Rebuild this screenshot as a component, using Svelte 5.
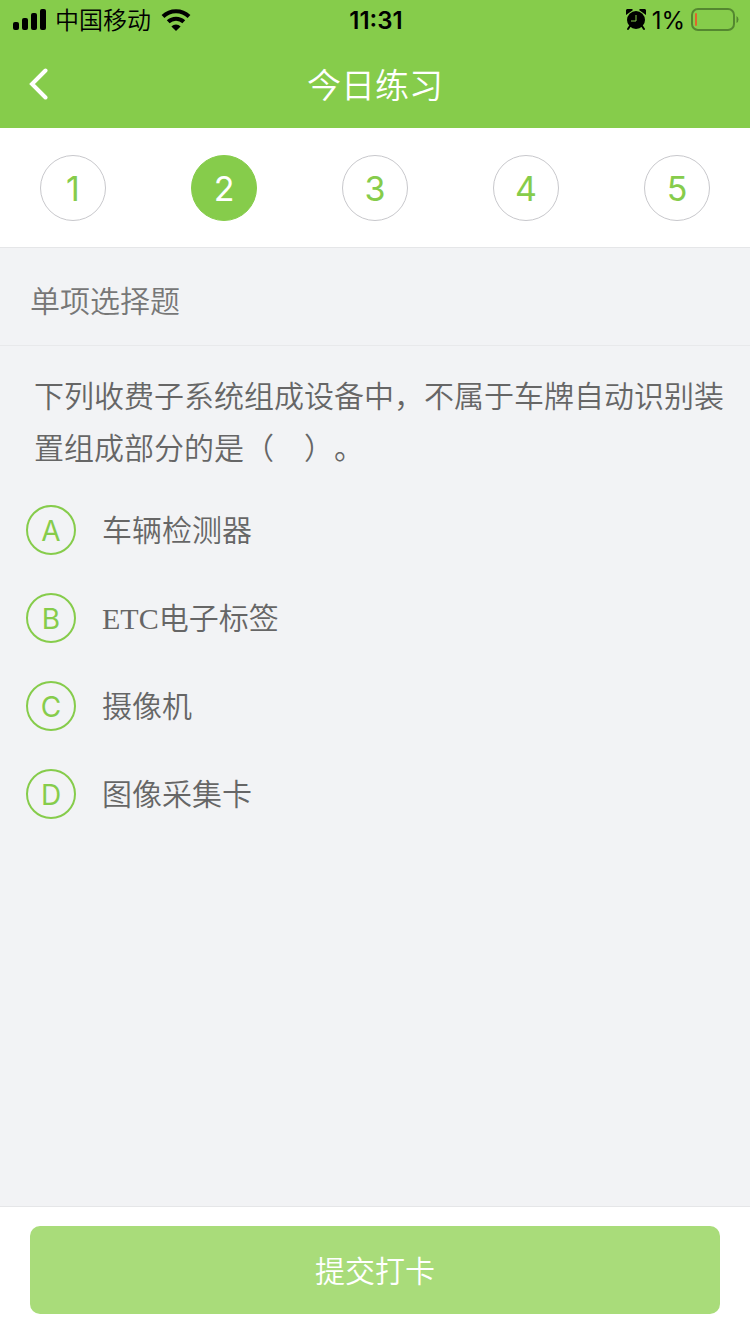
<script>
    const steps = [1, 2, 3, 4, 5];

    const options = [
        { key: 'A', text: '车辆检测器' },
        { key: 'B', text: 'ETC电子标签' },
        { key: 'C', text: '摄像机' },
        { key: 'D', text: '图像采集卡' }
    ];

    let current = 2;
    let answer = '';
</script>

<div class="page">
    <header class="top">
        <div class="status-bar">
            <div class="status-left">
                <svg class="signal" width="34" height="22" viewBox="0 0 34 22" aria-hidden="true">
                    <rect x="0" y="13" width="6" height="8" rx="2" />
                    <rect x="9" y="9" width="6" height="12" rx="2" />
                    <rect x="18" y="4" width="6" height="17" rx="2" />
                    <rect x="27" y="0" width="6" height="21" rx="2" />
                </svg>
                <span class="carrier">中国移动</span>
                <svg class="wifi" width="30" height="22" viewBox="0 0 30 22" aria-hidden="true">
                    <path d="M2 7.5a18.5 18.5 0 0 1 26 0" />
                    <path d="M7.2 12.8a11.2 11.2 0 0 1 15.6 0" />
                    <path class="dot" d="M15 22l-4.6-4.6a6.6 6.6 0 0 1 9.2 0z" />
                </svg>
            </div>
            <time class="clock">11:31</time>
            <div class="status-right">
                <svg width="20" height="22" viewBox="0 0 20 22" aria-hidden="true">
                    <path d="M0 6a4 4 0 0 1 7-5zM20 6a4 4 0 0 0-7-5z" />
                    <circle cx="10" cy="11" r="9" />
                    <path d="M4 17l-2 3M16 17l2 3" stroke="#000" stroke-width="2" stroke-linecap="round" />
                    <path d="M10 6V12H5" fill="none" stroke="#86cc4b" stroke-width="1" />
                </svg>
                <span class="percent">1%</span>
                <svg width="48" height="24" viewBox="0 0 48 24" aria-hidden="true">
                    <rect x="1" y="1" width="42" height="21" rx="6" fill="none" stroke="#548730" stroke-width="2" />
                    <path d="M45.5 8v7q2-1 2-3.500t-2-3.500z" fill="#548730" />
                    <rect x="4" y="5" width="2" height="13" rx="1" fill="#e0642c" />
                </svg>
            </div>
        </div>
        <div class="nav-bar">
            <button class="back" type="button" aria-label="返回">
                <svg width="20" height="32" viewBox="0 0 20 32" aria-hidden="true">
                    <path d="M16.500 2.500L3 16l13.500 13.500" />
                </svg>
            </button>
            <h1>今日练习</h1>
        </div>
    </header>

    <nav class="steps">
        {#each steps as step}
            <button
                type="button"
                class="step"
                class:active={step === current}
                on:click={() => (current = step)}
            >{step}</button>
        {/each}
    </nav>

    <main>
        <h2>单项选择题</h2>
        <p class="question" id="question">下列收费子系统组成设备中，不属于车牌自动识别装置组成部分的是（&#12288;）。</p>
        <div class="options" role="radiogroup" aria-labelledby="question">
            {#each options as option}
                <label class="option">
                    <input type="radio" name="answer" value={option.key} bind:group={answer} />
                    <span class="letter">{option.key}</span>
                    <span class="option-text">{option.text}</span>
                </label>
            {/each}
        </div>
    </main>

    <footer>
        <button class="submit" type="button">提交打卡</button>
    </footer>
</div>

<style>
    :global(body) {
        margin: 0;
    }

    .page {
        --green: #86cc4b;
        display: flex;
        flex-direction: column;
        min-height: 100vh;
        background: #f2f3f5;
        color: #666;
        font-family: Inter, "Noto Sans CJK SC", sans-serif;
        font-weight: 350;
        text-spacing-trim: space-all;
    }

    button {
        padding: 0;
        border: 0;
        background: none;
        font: inherit;
        cursor: pointer;
    }

    .top {
        background: var(--green);
    }

    .status-bar {
        display: grid;
        grid-template-columns: 1fr auto 1fr;
        align-items: center;
        height: 40px;
        padding: 0 11px 0 13px;
        color: #000;
        font-size: 24px;
        line-height: 36px;
    }

    .status-left,
    .status-right {
        display: flex;
        align-items: center;
    }

    .status-left {
        gap: 8px;
    }

    .carrier,
    .clock,
    .percent {
        padding-top: 2px;
    }

    .percent {
        font-weight: 400;
    }

    .wifi {
        margin-left: 2px;
        fill: none;
        stroke: #000;
        stroke-width: 4;
    }

    .wifi .dot {
        fill: #000;
        stroke: none;
    }

    .clock {
        font-weight: 600;
    }

    .status-right {
        justify-content: flex-end;
        gap: 6px;
    }

    .nav-bar {
        display: grid;
        grid-template-columns: 78px 1fr 78px;
        align-items: center;
        height: 88px;
    }

    .back {
        display: flex;
        align-items: center;
        justify-content: center;
        height: 88px;
    }

    .back path {
        fill: none;
        stroke: #fff;
        stroke-width: 4;
        stroke-linecap: round;
    }

    h1 {
        margin: 0;
        padding-top: 4px;
        color: #fff;
        font-size: 34px;
        font-weight: 350;
        line-height: 84px;
        text-align: center;
    }

    .steps {
        display: flex;
        justify-content: space-between;
        padding: 27px 40px 26px;
        border-bottom: 1px solid #e5e6e8;
        background: #fff;
    }

    .step {
        box-sizing: border-box;
        width: 66px;
        height: 66px;
        border: 1px solid #c8c8cc;
        border-radius: 50%;
        color: var(--green);
        font-size: 34px;
        font-weight: 400;
    }

    .step.active {
        border-color: var(--green);
        background: var(--green);
        color: #fff;
    }

    main {
        flex: 1;
    }

    h2 {
        margin: 0;
        padding: 9px 30px 0;
        border-bottom: 1px solid #e8e9eb;
        color: #777;
        font-size: 30px;
        font-weight: 350;
        line-height: 88px;
    }

    .question {
        margin: 0;
        padding: 24px 26px 0 34px;
        font-size: 30px;
        line-height: 52px;
    }

    .options {
        display: flex;
        flex-direction: column;
        gap: 38px;
        padding: 31px 26px;
    }

    .option {
        position: relative;
        display: flex;
        align-items: center;
        gap: 26px;
        font-size: 30px;
        cursor: pointer;
    }

    .option input {
        position: absolute;
        width: 50px;
        height: 50px;
        margin: 0;
        opacity: 0;
        cursor: pointer;
    }

    .letter {
        box-sizing: border-box;
        width: 50px;
        height: 50px;
        border: 2px solid var(--green);
        border-radius: 50%;
        color: var(--green);
        font-size: 28px;
        font-weight: 400;
        line-height: 48px;
        text-align: center;
    }

    .option input:checked + .letter {
        background: var(--green);
        color: #fff;
    }

    .option-text {
        padding-top: 2px;
        font-family: "Liberation Serif", "Noto Sans CJK SC", serif;
        line-height: 48px;
    }

    footer {
        padding: 19px 30px 20px;
        border-top: 1px solid #e5e6e8;
        background: #fff;
    }

    .submit {
        width: 100%;
        height: 88px;
        padding-bottom: 2px;
        border-radius: 10px;
        background: #a9dc7a;
        color: #fff;
        font-size: 30px;
    }
</style>
